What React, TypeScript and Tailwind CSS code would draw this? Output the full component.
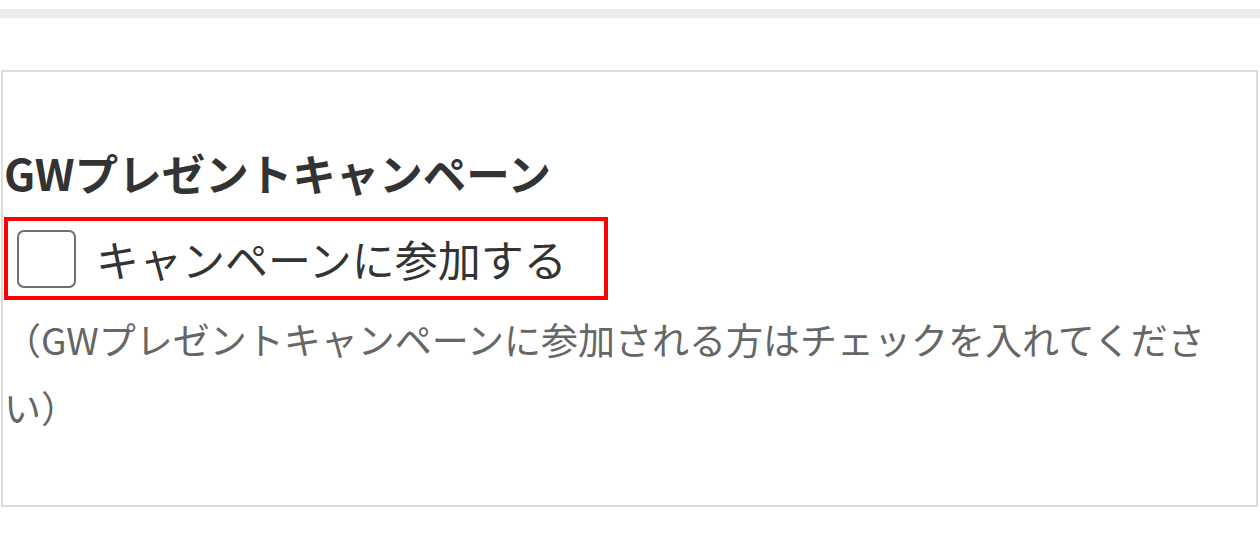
export default function App() {
  return (
    <div
      className="min-h-screen bg-white"
      style={{ fontFamily: '"Noto Sans CJK JP", "Noto Sans", sans-serif' }}
    >
      <div className="pt-[9px]">
        <div className="h-[9px] bg-[#ebebeb]" />
      </div>
      <div className="mt-[52px] ml-px mr-[2px] border-2 border-[#dcdcdc] pt-[76px] pb-[64px] pl-[1px] pr-[20px]">
        <h2 className="text-[43.5px] leading-[50px] font-bold text-[#333]">
          GWプレゼントキャンペーン
        </h2>
        <label className="mt-[19px] flex h-[83px] w-[604px] items-center border-4 border-[#ff0000] pl-[9px]">
          <span className="h-[58px] w-[59px] shrink-0 rounded-[7px] border-2 border-[#6f6f6f] bg-white" />
          <span className="ml-[20px] text-[43px] leading-none text-[#333]">キャンペーンに参加する</span>
        </label>
        <p className="mt-[5px] w-[1225px] text-[37px] leading-[68px] text-[#666]">
          （GWプレゼントキャンペーンに参加される方はチェックを入れてください）
        </p>
      </div>
    </div>
  );
}
